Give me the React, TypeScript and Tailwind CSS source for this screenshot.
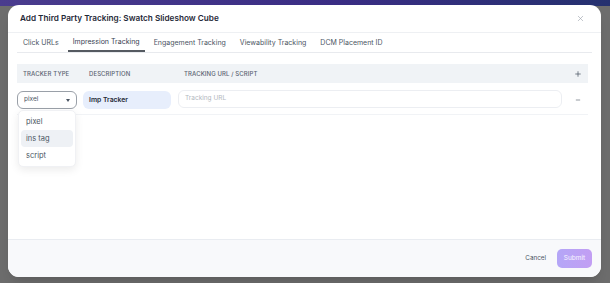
import { X, Plus, Minus } from "lucide-react"

const tabs = ["Click URLs", "Impression Tracking", "Engagement Tracking", "Viewability Tracking", "DCM Placement ID"]

export default function App() {
  return (
    <div
      className="w-[610px] h-[283px] overflow-hidden bg-[#6d6d6d] bg-[linear-gradient(to_right,#4a3c8e,#3a2d84_55%,#25316f)] bg-no-repeat bg-[length:100%_6px] pt-[5px] pl-[8px] pr-[9px]"
      style={{ fontFamily: "Inter, 'Noto Sans', sans-serif" }}
    >
      <div className="w-[593px] h-[272px] bg-white rounded-[11px] flex flex-col overflow-hidden shadow-lg">
        {/* header */}
        <div className="h-[28px] shrink-0 flex items-center justify-between pl-[12px] pr-[16px] border-b border-[#eef0f3]">
          <h2 className="text-[8.2px] font-semibold text-[#1f2937]">
            Add Third Party Tracking: Swatch Slideshow Cube
          </h2>
          <X size={9} strokeWidth={1.6} className="text-[#9aa1ab]" />
        </div>

        <div className="flex-1 px-[9px] relative">
          {/* tabs */}
          <div className="flex border-b border-[#e8eaee] h-[20px] pl-[6px] gap-[14px]">
            {tabs.map((t, i) => (
              <div
                key={t}
                className={
                  "text-[7px] flex items-center h-full " +
                  (i === 1 ? "border-b-2 border-[#555a61] text-[#374151] -mb-px px-[5px] -mx-[5px] pt-[2px]" : "text-[#4b5563] pt-px")
                }
              >
                {t}
              </div>
            ))}
          </div>

          {/* table */}
          <div className="mt-[11px] w-[571px]">
            <div className="h-[19px] bg-[#f0f3f6] flex items-center text-[6px] font-medium text-[#5b6472] uppercase tracking-[0.1px]">
              <div className="w-[72px] pl-[6px]">Tracker Type</div>
              <div className="w-[95px]">Description</div>
              <div className="flex-1">Tracking URL / Script</div>
              <div className="w-[20px] flex justify-center">
                <Plus size={8} strokeWidth={2.2} className="text-[#4b5563]" />
              </div>
            </div>
            <div className="h-[32px] flex items-start pt-[8px] border-b border-[#f1f3f6]">
              <div className="w-[60px] h-[18px] border border-[#9aa0a8] rounded-[6px] flex items-center justify-between px-[6px] text-[6.5px] text-[#4b5563]">
                <span>pixel</span>
                <span className="w-0 h-0 border-l-[2.5px] border-r-[2.5px] border-t-[3px] border-l-transparent border-r-transparent border-t-[#4b5563]" />
              </div>
              <div className="ml-[6px] w-[88px] h-[18px] bg-[#e7eefc] rounded-[6px] flex items-center px-[6px] text-[6.8px] font-semibold text-[#1f2937]">
                Imp Tracker
              </div>
              <div className="ml-[7px] w-[384px] h-[18px] border border-[#eceef2] rounded-[6px] flex items-center px-[6px] text-[6.5px] text-[#b3b8c0] -mt-[1px]">
                Tracking URL
              </div>
              <div className="flex-1 h-[18px] flex items-center justify-end pr-[7px]">
                <Minus size={6} strokeWidth={2.4} className="text-[#4b5563]" />
              </div>
            </div>
          </div>

          {/* dropdown */}
          <div className="absolute left-[10px] top-[77px] w-[58px] bg-white rounded-[5px] border border-[#f0f1f4] shadow-[0_3px_8px_rgba(0,0,0,0.08)] py-[2px] px-[2px] text-[7.5px] text-[#4b5563]">
            <div className="h-[17px] flex items-center px-[5px]">pixel</div>
            <div className="h-[17px] flex items-center px-[5px] bg-[#eef1f5] rounded-[4px]">ins tag</div>
            <div className="h-[17px] flex items-center px-[5px]">script</div>
          </div>
        </div>

        {/* footer */}
        <div className="h-[38px] shrink-0 bg-[#f8f9fb] border-t border-[#e9ecf1] flex items-center justify-end gap-[11px] pr-[9px]">
          <button className="text-[6.3px] text-[#4b5563]">Cancel</button>
          <button className="w-[35px] h-[19px] rounded-[5px] bg-[linear-gradient(to_right,#b4a6f7,#c29ef3)] text-[6.5px] text-white/90">
            Submit
          </button>
        </div>
      </div>
    </div>
  )
}
